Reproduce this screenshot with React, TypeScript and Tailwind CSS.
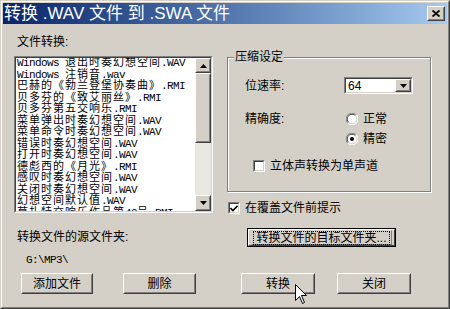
import React from "react";

const files = [
  "Windows 退出时奏幻想空间.WAV",
  "Windows 注销音.wav",
  "巴赫的《勃兰登堡协奏曲》.RMI",
  "贝多芬的《致艾丽丝》.RMI",
  "贝多芬第五交响乐.RMI",
  "菜单弹出时奏幻想空间.WAV",
  "菜单命令时奏幻想空间.WAV",
  "错误时奏幻想空间.WAV",
  "打开时奏幻想空间.WAV",
  "德彪西的《月光》.RMI",
  "感叹时奏幻想空间.WAV",
  "关闭时奏幻想空间.WAV",
  "幻想空间默认值.WAV",
  "莫扎特交响乐作品第40号.RMI",
];

// ASCII runs get a half-width mono font, like the old bitmap font
function Mixed({ text }: { text: string }) {
  const parts = text.split(/([\x20-\x7e]+)/).filter(Boolean);
  return (
    <>
      {parts.map((p, i) =>
        /^[\x20-\x7e]+$/.test(p) ? (
          <span key={i} className="font-['Liberation_Mono',monospace] text-[11px] tracking-[-0.6px] whitespace-pre">
            {p}
          </span>
        ) : (
          <span key={i} className="text-[11px] tracking-[1px]">{p}</span>
        )
      )}
    </>
  );
}

function Raised({ className = "", children }: { className?: string; children?: React.ReactNode }) {
  return (
    <div className={`border border-t-white border-l-white border-r-[#404040] border-b-[#404040] ${className}`}>
      <div className="w-full h-full border border-t-[#d4d0c8] border-l-[#d4d0c8] border-r-[#808080] border-b-[#808080] flex items-center justify-center">
        {children}
      </div>
    </div>
  );
}

function Sunken({ className = "", inner = "", children }: { className?: string; inner?: string; children?: React.ReactNode }) {
  return (
    <div className={`border border-t-[#808080] border-l-[#808080] border-r-white border-b-white ${className}`}>
      <div className={`w-full h-full border border-t-[#404040] border-l-[#404040] border-r-[#d4d0c8] border-b-[#d4d0c8] bg-white ${inner}`}>
        {children}
      </div>
    </div>
  );
}

function Arrow({ down }: { down?: boolean }) {
  return (
    <svg width="7" height="4" viewBox="0 0 7 4">
      <polygon points={down ? "0,0 7,0 3.5,4" : "0,4 7,4 3.5,0"} fill="#000" />
    </svg>
  );
}

function Check() {
  return (
    <Sunken className="w-[12px] h-[12px] shrink-0" inner="flex items-center justify-center">
      <svg width="8" height="7" viewBox="0 0 8 7">
        <path d="M0.5 3 L3 5.5 L7.5 0.8" stroke="#000" strokeWidth="1.6" fill="none" />
      </svg>
    </Sunken>
  );
}

function EmptyCheck() {
  return <Sunken className="w-[12px] h-[12px] shrink-0" />;
}

function Radio({ on }: { on?: boolean }) {
  return (
    <svg width="12" height="12" viewBox="0 0 12 12" className="shrink-0">
      <circle cx="6" cy="6" r="5.5" fill="#fff" />
      <path d="M1.8 10.2 A5.5 5.5 0 0 1 10.2 1.8" stroke="#808080" strokeWidth="1" fill="none" />
      <path d="M2.6 9.4 A4.5 4.5 0 0 1 9.4 2.6" stroke="#404040" strokeWidth="1" fill="none" />
      <path d="M10.2 1.8 A5.5 5.5 0 0 1 1.8 10.2" stroke="#fff" strokeWidth="1" fill="none" />
      <path d="M9.4 2.6 A4.5 4.5 0 0 1 2.6 9.4" stroke="#d4d0c8" strokeWidth="1" fill="none" />
      {on && <circle cx="6" cy="6" r="2" fill="#000" />}
    </svg>
  );
}

export default function App() {
  return (
    <div className="relative w-[450px] h-[309px] bg-[#d4d0c8] border border-t-[#d4d0c8] border-l-[#d4d0c8] border-r-[#404040] border-b-[#404040] font-['Liberation_Sans','Noto_Sans_CJK_SC',sans-serif] text-[12px] leading-[12px] text-black">
      <div className="w-full h-full border border-t-white border-l-white border-r-[#808080] border-b-[#808080] p-[1px] flex flex-col">
        {/* Title bar */}
        <div className="h-[21px] flex items-center justify-between bg-linear-to-r from-[#0a246a] to-[#a6caf0]">
          <span className="pl-[1px] text-white text-[17px] leading-[21px] whitespace-pre">转换 .WAV 文件 到 .SWA 文件</span>
          <Raised className="w-[18px] h-[15px] mr-[2px] bg-[#d4d0c8]">
            <svg width="8" height="7" viewBox="0 0 8 7">
              <path d="M0.5 0.5 L7.5 6.5 M7.5 0.5 L0.5 6.5" stroke="#000" strokeWidth="1.8" />
            </svg>
          </Raised>
        </div>

        {/* Body */}
        <div className="flex flex-col">
          <div className="flex">
            {/* Left column */}
            <div className="ml-[11px] w-[199px] flex flex-col">
              <span className="mt-[12px] pl-[3px]">文件转换:</span>
              <Sunken className="mt-[8px] h-[157px]" inner="flex overflow-hidden">
                <div className="flex-1 overflow-hidden pl-[1px] -mt-[1px] leading-[11.5px] whitespace-nowrap">
                  {files.map((f) => (
                    <div key={f} className="h-[11.5px]">
                      <Mixed text={f} />
                    </div>
                  ))}
                </div>
                <div className="w-[16px] flex flex-col bg-[#e9e7e2]">
                  <Raised className="h-[15px] bg-[#d4d0c8]">
                    <Arrow />
                  </Raised>
                  <Raised className="h-[70px] bg-[#d4d0c8]" />
                  <div className="flex-1" />
                  <Raised className="h-[16px] bg-[#d4d0c8]">
                    <Arrow down />
                  </Raised>
                </div>
              </Sunken>
              <span className="mt-[18px] pl-[3px]">转换文件的源文件夹:</span>
              <span className="mt-[11px] pl-[12px] font-['Liberation_Mono',monospace] text-[11px] tracking-[-0.6px]">G:\MP3\</span>
            </div>

            {/* Right column */}
            <div className="ml-[14px] w-[205px] flex flex-col">
              <div className="relative mt-[33px] w-[204px] h-[135px] border border-[#808080] shadow-[inset_1px_1px_0_#fff,1px_1px_0_#fff] pl-[17px] pt-[19px]">
                <span className="absolute -top-[7px] left-[6px] px-[1px] bg-[#d4d0c8]">压缩设定</span>
                <div className="flex items-center h-[17px]">
                  <span className="w-[99px]">位速率:</span>
                  <Sunken className="w-[69px] h-[17px]" inner="flex items-center">
                    <span className="flex-1 pl-[2px] text-[12px]">64</span>
                    <Raised className="w-[16px] h-full bg-[#d4d0c8]">
                      <Arrow down />
                    </Raised>
                  </Sunken>
                </div>
                <div className="mt-[18px] flex items-center h-[13px]">
                  <span className="w-[101px]">精确度:</span>
                  <Radio />
                  <span className="ml-[5px]">正常</span>
                </div>
                <div className="mt-[7px] flex items-center h-[13px] pl-[101px]">
                  <Radio on />
                  <span className="ml-[5px]">精密</span>
                </div>
                <div className="mt-[15px] flex items-center h-[12px] pl-[8px]">
                  <EmptyCheck />
                  <span className="ml-[5px]">立体声转换为单声道</span>
                </div>
              </div>
              <div className="mt-[10px] flex items-center h-[12px] ml-[1px]">
                <Check />
                <span className="ml-[5px]">在覆盖文件前提示</span>
              </div>
              <div className="mt-[14px] ml-[20px] w-[149px] h-[19px] border border-black">
                <Raised className="w-full h-full px-[2px]">
                  <span className="border border-dotted border-black px-[2px] leading-[12px]">转换文件的目标文件夹...</span>
                </Raised>
              </div>
            </div>
          </div>

          {/* Buttons */}
          <div className="mt-[7px] flex h-[21px] pl-[18px]">
            <Raised className="w-[72px]">添加文件</Raised>
            <Raised className="ml-[30px] w-[73px]">删除</Raised>
            <Raised className="ml-[45px] w-[74px]">转换</Raised>
            <Raised className="ml-[22px] w-[74px]">关闭</Raised>
          </div>
        </div>
      </div>

      {/* Mouse pointer */}
      <svg className="absolute left-[294px] top-[283px]" width="13" height="21" viewBox="0 0 13 21">
        <path d="M0.5 0.5 L0.5 16.5 L4.5 12.5 L7.5 19.5 L9.5 18.5 L6.5 11.5 L11.5 11.5 Z" fill="#fff" stroke="#000" strokeWidth="1" />
      </svg>
    </div>
  );
}
